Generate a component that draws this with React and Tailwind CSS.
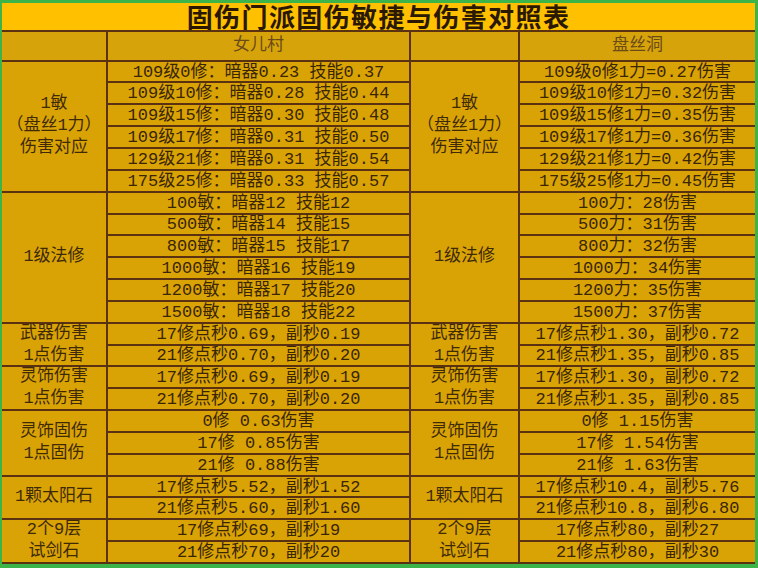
import React from "react";

const sections = [
  {
    label: ["1敏", "（盘丝1力）", "伤害对应"],
    left: [
      "109级0修：暗器0.23 技能0.37",
      "109级10修：暗器0.28 技能0.44",
      "109级15修：暗器0.30 技能0.48",
      "109级17修：暗器0.31 技能0.50",
      "129级21修：暗器0.31 技能0.54",
      "175级25修：暗器0.33 技能0.57",
    ],
    right: [
      "109级0修1力=0.27伤害",
      "109级10修1力=0.32伤害",
      "109级15修1力=0.35伤害",
      "109级17修1力=0.36伤害",
      "129级21修1力=0.42伤害",
      "175级25修1力=0.45伤害",
    ],
  },
  {
    label: ["1级法修"],
    left: [
      "100敏：暗器12 技能12",
      "500敏：暗器14 技能15",
      "800敏：暗器15 技能17",
      "1000敏：暗器16 技能19",
      "1200敏：暗器17 技能20",
      "1500敏：暗器18 技能22",
    ],
    right: [
      "100力：28伤害",
      "500力：31伤害",
      "800力：32伤害",
      "1000力：34伤害",
      "1200力：35伤害",
      "1500力：37伤害",
    ],
  },
  {
    label: ["武器伤害", "1点伤害"],
    left: ["17修点秒0.69，副秒0.19", "21修点秒0.70，副秒0.20"],
    right: ["17修点秒1.30，副秒0.72", "21修点秒1.35，副秒0.85"],
  },
  {
    label: ["灵饰伤害", "1点伤害"],
    left: ["17修点秒0.69，副秒0.19", "21修点秒0.70，副秒0.20"],
    right: ["17修点秒1.30，副秒0.72", "21修点秒1.35，副秒0.85"],
  },
  {
    label: ["灵饰固伤", "1点固伤"],
    left: ["0修 0.63伤害", "17修 0.85伤害", "21修 0.88伤害"],
    right: ["0修 1.15伤害", "17修 1.54伤害", "21修 1.63伤害"],
  },
  {
    label: ["1颗太阳石"],
    left: ["17修点秒5.52，副秒1.52", "21修点秒5.60，副秒1.60"],
    right: ["17修点秒10.4，副秒5.76", "21修点秒10.8，副秒6.80"],
  },
  {
    label: ["2个9层", "试剑石"],
    left: ["17修点秒69，副秒19", "21修点秒70，副秒20"],
    right: ["17修点秒80，副秒27", "21修点秒80，副秒30"],
  },
];

// label text may be taller than its merged cell, so it is centred on a zero-height box
function Label({ lines }) {
  return (
    <div className="flex items-center justify-center bg-[#d9a306] text-[#3f2a06] text-[17px]">
      <div className="h-0 flex flex-col items-center justify-center leading-[22px]">
        {lines.map((l, i) => (
          <span key={i}>{l}</span>
        ))}
      </div>
    </div>
  );
}

function Stack({ rows }) {
  return (
    <div className="flex flex-col gap-[2px]">
      {rows.map((r, i) => (
        <div
          key={i}
          className="h-[19.85px] flex items-center justify-center bg-[#d9a306] text-[#3a2504] text-[17px] leading-none whitespace-pre pt-[1px]"
        >
          {r}
        </div>
      ))}
    </div>
  );
}

export default function App() {
  return (
    <div
      className="w-[758px] h-[568px] bg-[#3cb44a] pt-[3px] pl-[2px] pr-[3px] pb-[4px]"
      style={{ fontFamily: '"Liberation Mono", "Noto Sans CJK SC", monospace' }}
    >
      <div className="h-full flex flex-col gap-[2px] bg-[#5a3212]">
        <div
          className="h-[29px] bg-[#ffc000] flex items-center justify-center text-[26px] leading-none font-bold text-[#2a1800] tracking-[1.4px]"
          style={{ fontFamily: '"Noto Sans CJK SC", sans-serif' }}
        >
          固伤门派固伤敏捷与伤害对照表
        </div>
        <div className="h-[30px] grid grid-cols-[104px_301px_107px_1fr] gap-[2px]">
          <div className="bg-[#d6a40a]" />
          <div className="bg-[#d6a40a] flex items-center justify-center text-[17px] text-[#6b4a18]">女儿村</div>
          <div className="bg-[#d6a40a]" />
          <div className="bg-[#d6a40a] flex items-center justify-center text-[17px] text-[#6b4a18]">盘丝洞</div>
        </div>
        {sections.map((s, i) => (
          <div key={i} className="grid grid-cols-[104px_301px_107px_1fr] gap-[2px]">
            <Label lines={s.label} />
            <Stack rows={s.left} />
            <Label lines={s.label} />
            <Stack rows={s.right} />
          </div>
        ))}
        <div className="flex-1 bg-[#d9a306]" />
      </div>
    </div>
  );
}
